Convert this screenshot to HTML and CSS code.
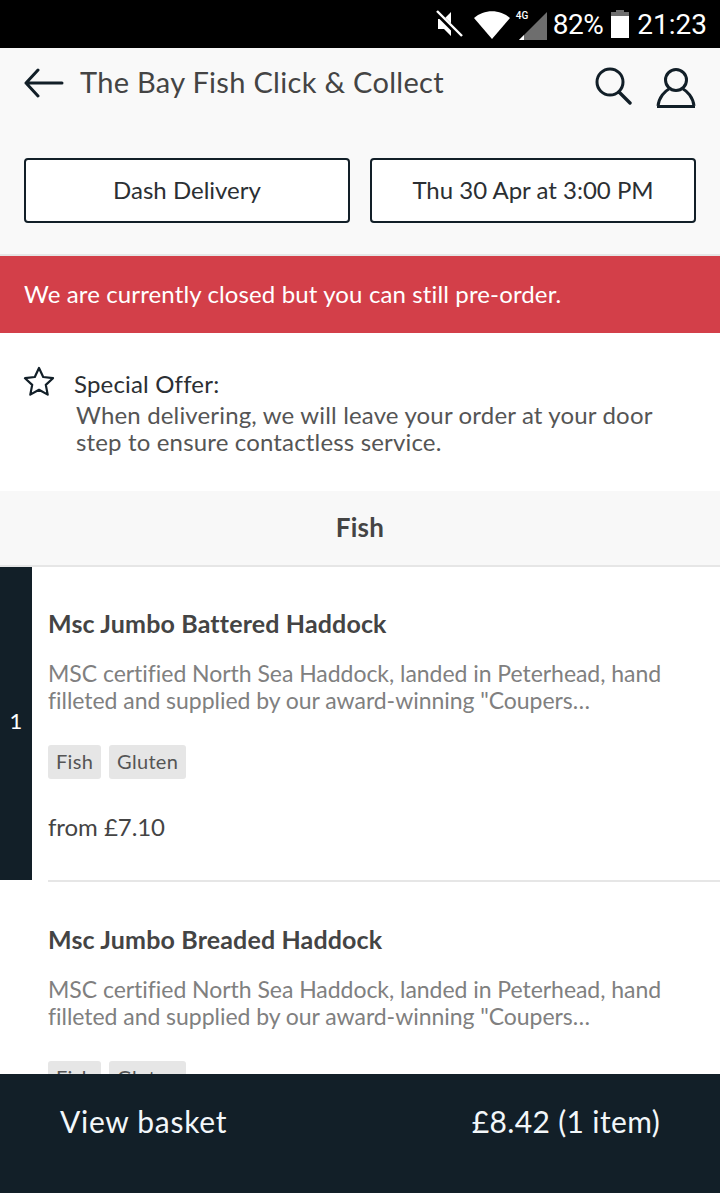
FILE: index.html
```html
<!DOCTYPE html>
<html lang="en">
<head>
<meta charset="utf-8">
<title>The Bay Fish Click &amp; Collect</title>
<link rel="stylesheet" href="styles.css">
</head>
<body>
<div class="app">
  <div class="status">
    <svg class="ic-mute" viewBox="0 0 28 28"><path d="M3 9h6l7-7v24l-7-7H3z" fill="#fff"/><path d="M1 2l25 25" stroke="#000" stroke-width="5"/><path d="M2 1l25 25" stroke="#fff" stroke-width="2.4"/></svg>
    <svg class="ic-wifi" viewBox="0 0 36 28"><path d="M0 7C10-2 26-2 36 7L18 28z" fill="#fff"/></svg>
    <div class="sig">
      <span class="sig-label">4G</span>
      <svg class="ic-sig" viewBox="0 0 28 28"><path d="M28 0v28H0z" fill="#6e6e6e"/><path d="M0 28l5-5v5z" fill="#fff"/></svg>
    </div>
    <span class="pct">82%</span>
    <svg class="ic-batt" viewBox="0 0 18 28"><path d="M5 0h8v2h5v5H0V2h5z" fill="#6e6e6e"/><path d="M0 6h18v22H0z" fill="#fff"/></svg>
    <span class="time">21:23</span>
  </div>
  <div class="main">
    <header class="head">
      <div class="bar">
        <svg class="ic-back" viewBox="0 0 40 30"><path d="M38 15H2M14 2L2 15l12 13" fill="none" stroke="#121f28" stroke-width="3" stroke-linecap="round" stroke-linejoin="round"/></svg>
        <h1 class="title">The Bay Fish Click &amp; Collect</h1>
        <svg class="ic-search" viewBox="0 0 38 38"><circle cx="16" cy="15" r="13" fill="none" stroke="#121f28" stroke-width="3"/><path d="M25 25l11 11" stroke="#121f28" stroke-width="3.4" stroke-linecap="round"/></svg>
        <svg class="ic-user" viewBox="0 0 40 40"><circle cx="20" cy="12" r="10.5" fill="none" stroke="#121f28" stroke-width="3"/><path d="M2 38c1-9 7-15 11-17M38 38c-1-9-7-15-11-17M1 38.500h38" fill="none" stroke="#121f28" stroke-width="3"/></svg>
      </div>
      <div class="choices">
        <div class="choice">Dash Delivery</div>
        <div class="choice">Thu 30 Apr at 3:00 PM</div>
      </div>
    </header>
    <div class="banner">We are currently closed but you can still pre-order.</div>
    <section class="offer">
      <svg class="ic-star" viewBox="0 0 32 30"><path d="M16 2l4.200 9 9.800 1.200-7.200 6.700 1.900 9.700L16 23.800l-8.700 4.800 1.900-9.700L2 12.200 11.800 11z" fill="none" stroke="#121f28" stroke-width="2.200" stroke-linejoin="round"/></svg>
      <div class="offer-text">
        <div class="offer-title">Special Offer:</div>
        <p class="offer-body">When delivering, we will leave your order at your door step to ensure contactless service.</p>
      </div>
    </section>
    <h2 class="cat">Fish</h2>
    <article class="item">
      <div class="qty">1</div>
      <div class="item-body">
        <h3 class="name">Msc Jumbo Battered Haddock</h3>
        <p class="desc">MSC certified North Sea Haddock, landed in Peterhead, hand filleted and supplied by our award-winning "Coupers…</p>
        <div class="tags"><span class="tag">Fish</span><span class="tag">Gluten</span></div>
        <div class="price">from £7.10</div>
      </div>
    </article>
    <article class="item item-next">
      <div class="item-body">
        <h3 class="name">Msc Jumbo Breaded Haddock</h3>
        <p class="desc">MSC certified North Sea Haddock, landed in Peterhead, hand filleted and supplied by our award-winning "Coupers…</p>
        <div class="tags"><span class="tag">Fish</span><span class="tag">Gluten</span></div>
      </div>
    </article>
  </div>
  <footer class="basket">
    <span class="basket-label">View basket</span>
    <span class="basket-total">£8.42 (1 item)</span>
  </footer>
</div>
</body>
</html>
```

FILE: styles.css
```css
* { box-sizing: border-box; }
html, body { margin: 0; padding: 0; }
body { font-family: Lato, "Open Sans", sans-serif; color: #444; background: #fff; }
.app { width: 720px; height: 1193px; display: flex; flex-direction: column; overflow: hidden; }

.status { height: 48px; flex: none; background: #000; color: #fff; display: flex; align-items: center; padding-right: 13px; font-family: Roboto, sans-serif; font-size: 28px; justify-content: flex-end; }
.ic-mute { width: 28px; height: 28px; margin-right: 11px; }
.ic-wifi { width: 36px; height: 28px; margin-right: 5px; margin-top: 1px; }
.sig { position: relative; width: 32px; height: 30px; margin-right: 6px; margin-top: 1px; }
.sig-label { position: absolute; left: 1px; top: 0; font-size: 10px; font-weight: 500; line-height: 12px; }
.ic-sig { position: absolute; right: 0; bottom: 0; width: 28px; height: 28px; }
.pct { margin-right: 8px; letter-spacing: -.5px; }
.ic-batt { width: 18px; height: 28px; margin-right: 8px; }

.main { flex: 1; min-height: 0; overflow: hidden; }

.head { background: #f9f9f9; height: 208px; border-bottom: 2px solid #e6e6e6; }
.bar { height: 72px; display: flex; align-items: center; padding: 0 24px; }
.ic-back { width: 40px; height: 30px; flex: none; margin-top: -2px; }
.title { flex: 1; margin: -4px 0 0 16px; font-size: 29px; font-weight: 400; color: #444; letter-spacing: .3px; white-space: nowrap; line-height: 36px; }
.ic-search { width: 38px; height: 38px; flex: none; margin-right: 24px; margin-top: 4px; }
.ic-user { width: 40px; height: 40px; flex: none; margin-top: 8px; }
.choices { display: flex; gap: 20px; padding: 38px 24px 0; }
.choice { flex: 1; height: 65px; border: 2px solid #121f28; border-radius: 4px; background: #fff; display: flex; align-items: center; justify-content: center; padding-bottom: 2px; font-size: 24px; color: #2b2f33; }

.banner { height: 77px; background: #d33f49; color: #fff; display: flex; align-items: center; padding: 0 24px 2px; font-size: 24px; letter-spacing: .13px; }

.offer { height: 158px; background: #fff; display: flex; padding: 34px 24px 0; }
.ic-star { width: 32px; height: 30px; flex: none; margin-right: 19px; margin-left: -1px; margin-top: -1px; }
.offer-text { flex: 1; margin-top: 2px; }
.offer-title { font-size: 24px; color: #2b2f33; line-height: 30px; letter-spacing: .18px; }
.offer-body { margin: 2px 0 0 2px; font-size: 24px; line-height: 27px; color: #555; letter-spacing: .16px; width: 600px; }

.cat { margin: 0; height: 76px; background: #f8f8f8; border-bottom: 2px solid #e6e6e6; display: flex; align-items: center; justify-content: center; padding-bottom: 2px; font-size: 26px; font-weight: 700; color: #444; letter-spacing: .3px; }

.item { display: flex; height: 315px; }
.qty { width: 32px; flex: none; height: 313px; background: #121f28; color: #fff; font-size: 22px; display: flex; align-items: center; justify-content: center; padding-bottom: 6px; }
.item-body { flex: 1; margin-left: 16px; border-bottom: 2px solid #e6e6e6; padding-top: 40px; height: 315px; }
.item-next { margin-left: 32px; height: 240px; }
.item-next .item-body { border-bottom: 0; padding-top: 41px; }
.name { margin: 0; font-size: 25px; font-weight: 700; line-height: 32px; color: #444; letter-spacing: .15px; }
.desc { margin: 21px 0 0; font-size: 23px; line-height: 27px; color: #808080; letter-spacing: -.04px; width: 660px; }
.tags { display: flex; gap: 8px; margin-top: 31px; }
.tag { height: 34px; padding: 0 8px; background: #e6e6e6; border-radius: 3px; font-size: 20px; line-height: 32px; color: #555; letter-spacing: .3px; }
.price { margin-top: 31px; font-size: 24px; line-height: 34px; color: #444; letter-spacing: -.05px; }

.basket { flex: none; height: 119px; background: #121f28; color: #f2f7fa; display: flex; justify-content: space-between; padding: 25px 60px 0; font-size: 30px; line-height: 44px; }
.basket-label { letter-spacing: .7px; }
.basket-total { letter-spacing: .35px; }
```
